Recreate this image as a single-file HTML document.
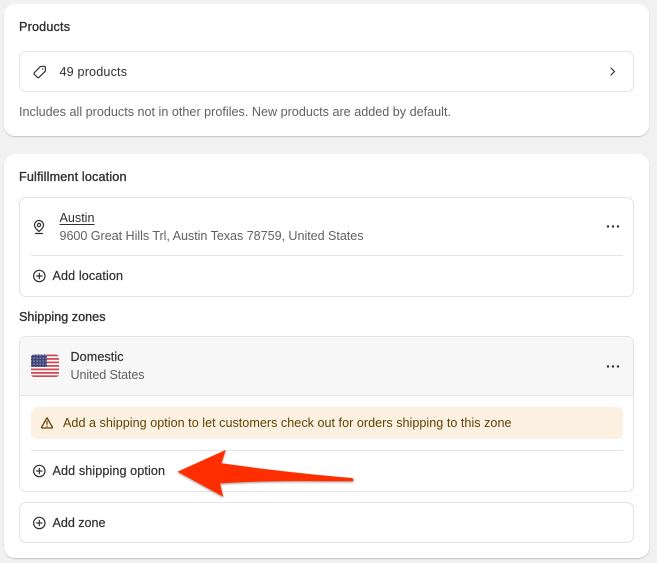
<!DOCTYPE html>
<html><head><meta charset="utf-8"><style>
html,body{margin:0;padding:0;background:#f1f1f1;width:657px;height:563px;overflow:hidden}
svg{display:block}
text{font-family:"Liberation Sans",sans-serif;font-size:12.6px;fill:#303030}
.b{fill:#303030;stroke:#303030;stroke-width:.35}
.s{fill:#303030;stroke:#303030;stroke-width:.2}
.m{fill:#616161}
.ic{fill:none;stroke:#303030;stroke-width:1.2;stroke-linecap:round;stroke-linejoin:round}
</style></head><body>
<svg width="657" height="563" viewBox="0 0 657 563" xmlns="http://www.w3.org/2000/svg">
<defs>
<filter id="cs" x="-5%" y="-5%" width="110%" height="110%"><feDropShadow dx="0" dy="1" stdDeviation="0.6" flood-color="#000" flood-opacity="0.2"/></filter>
<filter id="as" x="-10%" y="-20%" width="120%" height="140%"><feDropShadow dx="0" dy="1" stdDeviation="1" flood-color="#000" flood-opacity="0.4"/></filter>
<clipPath id="fc"><rect x="31" y="354.500" width="28" height="22.500" rx="3"/></clipPath>
<pattern id="st" width="3" height="3" patternUnits="userSpaceOnUse"><rect width="3" height="3" fill="#3f4478"/><rect x="0.5" y="0.5" width="1.200" height="1.200" fill="#aab0cc"/></pattern>
</defs>

<rect x="4" y="4" width="645" height="132" rx="11" fill="#fff" filter="url(#cs)"/>
<rect x="4" y="154" width="645" height="404" rx="11" fill="#fff" filter="url(#cs)"/>

<text class="b" x="19" y="31" textLength="51" lengthAdjust="spacing">Products</text>
<rect x="19.500" y="51.500" width="614" height="40" rx="6.500" fill="#fff" stroke="#e3e3e3"/>
<path class="ic" d="M34.500 72.500l5.500-5.600c.4-.4.9-.6 1.400-.6h2.600c.8 0 1.400.6 1.400 1.400v2.600c0 .5-.2 1-.6 1.400l-5.600 5.500c-.6.6-1.400.6-2 0l-2.700-2.700c-.6-.6-.6-1.400 0-2z"/>
<circle cx="42.600" cy="69" r=".7" fill="#303030"/>
<text x="59.500" y="76" textLength="67.500" lengthAdjust="spacing">49 products</text>
<path class="ic" d="M611 68l3.500 3.500-3.500 3.500" stroke-width="1.400"/>
<text class="m" x="19" y="116" textLength="432" lengthAdjust="spacing">Includes all products not in other profiles. New products are added by default.</text>

<text class="b" x="19" y="181" textLength="107.500" lengthAdjust="spacing">Fulfillment location</text>
<rect x="19.500" y="197.500" width="614" height="99" rx="6.500" fill="#fff" stroke="#e3e3e3"/>
<path class="ic" d="M39 231.500c-2.500-2.200-4.500-4-4.500-6.500a4.500 4.500 0 0 1 9 0c0 2.500-2 4.300-4.500 6.500z"/>
<circle class="ic" cx="39" cy="225" r="1.600"/>
<path class="ic" d="M35.500 233.500h7"/>
<text x="59.500" y="222" textLength="35" lengthAdjust="spacing">Austin</text>
<rect x="59.500" y="224" width="35" height="1" fill="#303030"/>
<text class="m" x="59.500" y="240" textLength="304" lengthAdjust="spacing">9600 Great Hills Trl, Austin Texas 78759, United States</text>
<g fill="#303030"><circle cx="608" cy="226.500" r="1.200"/><circle cx="613" cy="226.500" r="1.200"/><circle cx="618" cy="226.500" r="1.200"/></g>
<rect x="31" y="255" width="592" height="1" fill="#e3e3e3"/>
<circle class="ic" cx="39.300" cy="276" r="5.700"/><path class="ic" d="M39.300 273.300v5.400M36.600 276h5.400"/>
<text class="s" x="52.500" y="280" textLength="70.500" lengthAdjust="spacing">Add location</text>

<text class="b" x="19" y="321" textLength="86.500" lengthAdjust="spacing">Shipping zones</text>
<rect x="19.500" y="336.500" width="614" height="155" rx="6.500" fill="#fff" stroke="#e3e3e3"/>
<path d="M20 395V343a6 6 0 0 1 6-6H627a6 6 0 0 1 6 6V395z" fill="#f7f7f7"/>
<rect x="20" y="395" width="613" height="1" fill="#e3e3e3"/>
<g clip-path="url(#fc)">
<rect x="31" y="354.500" width="28" height="22.500" fill="#fff"/>
<g fill="#cf4a58"><rect x="31" y="354.500" width="28" height="1.800"/><rect x="31" y="358" width="28" height="1.800"/><rect x="31" y="361.500" width="28" height="1.800"/><rect x="31" y="365" width="28" height="1.800"/><rect x="31" y="368.500" width="28" height="1.800"/><rect x="31" y="372" width="28" height="1.800"/><rect x="31" y="375.300" width="28" height="1.800"/></g>
<rect x="31" y="354.500" width="16" height="12.500" fill="url(#st)"/>
</g>
<text class="s" x="70.500" y="361" textLength="53" lengthAdjust="spacing">Domestic</text>
<text class="m" x="70.500" y="379" textLength="74" lengthAdjust="spacing">United States</text>
<g fill="#303030"><circle cx="608" cy="366.500" r="1.200"/><circle cx="613" cy="366.500" r="1.200"/><circle cx="618" cy="366.500" r="1.200"/></g>

<rect x="31" y="407" width="592" height="32" rx="6" fill="#fcf0e3"/>
<path d="M47 417.800l-5.400 9.400c-.2.400.1.800.5.800h9.800c.4 0 .7-.4.500-.8z" fill="none" stroke="#5e4200" stroke-width="1.300" stroke-linejoin="round"/>
<path d="M47 421.300v3" stroke="#5e4200" stroke-width="1.200" stroke-linecap="round"/>
<circle cx="47" cy="426.200" r=".7" fill="#5e4200"/>
<text style="fill:#5e4200" x="63" y="427" textLength="448.500" lengthAdjust="spacing">Add a shipping option to let customers check out for orders shipping to this zone</text>
<rect x="31" y="450" width="592" height="1" fill="#e3e3e3"/>
<circle class="ic" cx="39.300" cy="471" r="5.700"/><path class="ic" d="M39.300 468.300v5.400M36.600 471h5.400"/>
<text class="s" x="52.500" y="475" textLength="112.500" lengthAdjust="spacing">Add shipping option</text>

<rect x="19.500" y="502.500" width="614" height="40" rx="6.500" fill="#fff" stroke="#e3e3e3"/>
<circle class="ic" cx="39.300" cy="523" r="5.700"/><path class="ic" d="M39.300 520.300v5.400M36.600 523h5.400"/>
<text class="s" x="52.500" y="527" textLength="53" lengthAdjust="spacing">Add zone</text>

<path d="M177.500 471.700L225.700 450 221.500 463.300C265 469.500 310 474.500 352 478 354 479 354 481 352.500 481.300 308 481 262 480.500 220 483.500L223.300 496.700z" fill="#ff2d00" filter="url(#as)"/>
</svg>
</body></html>
